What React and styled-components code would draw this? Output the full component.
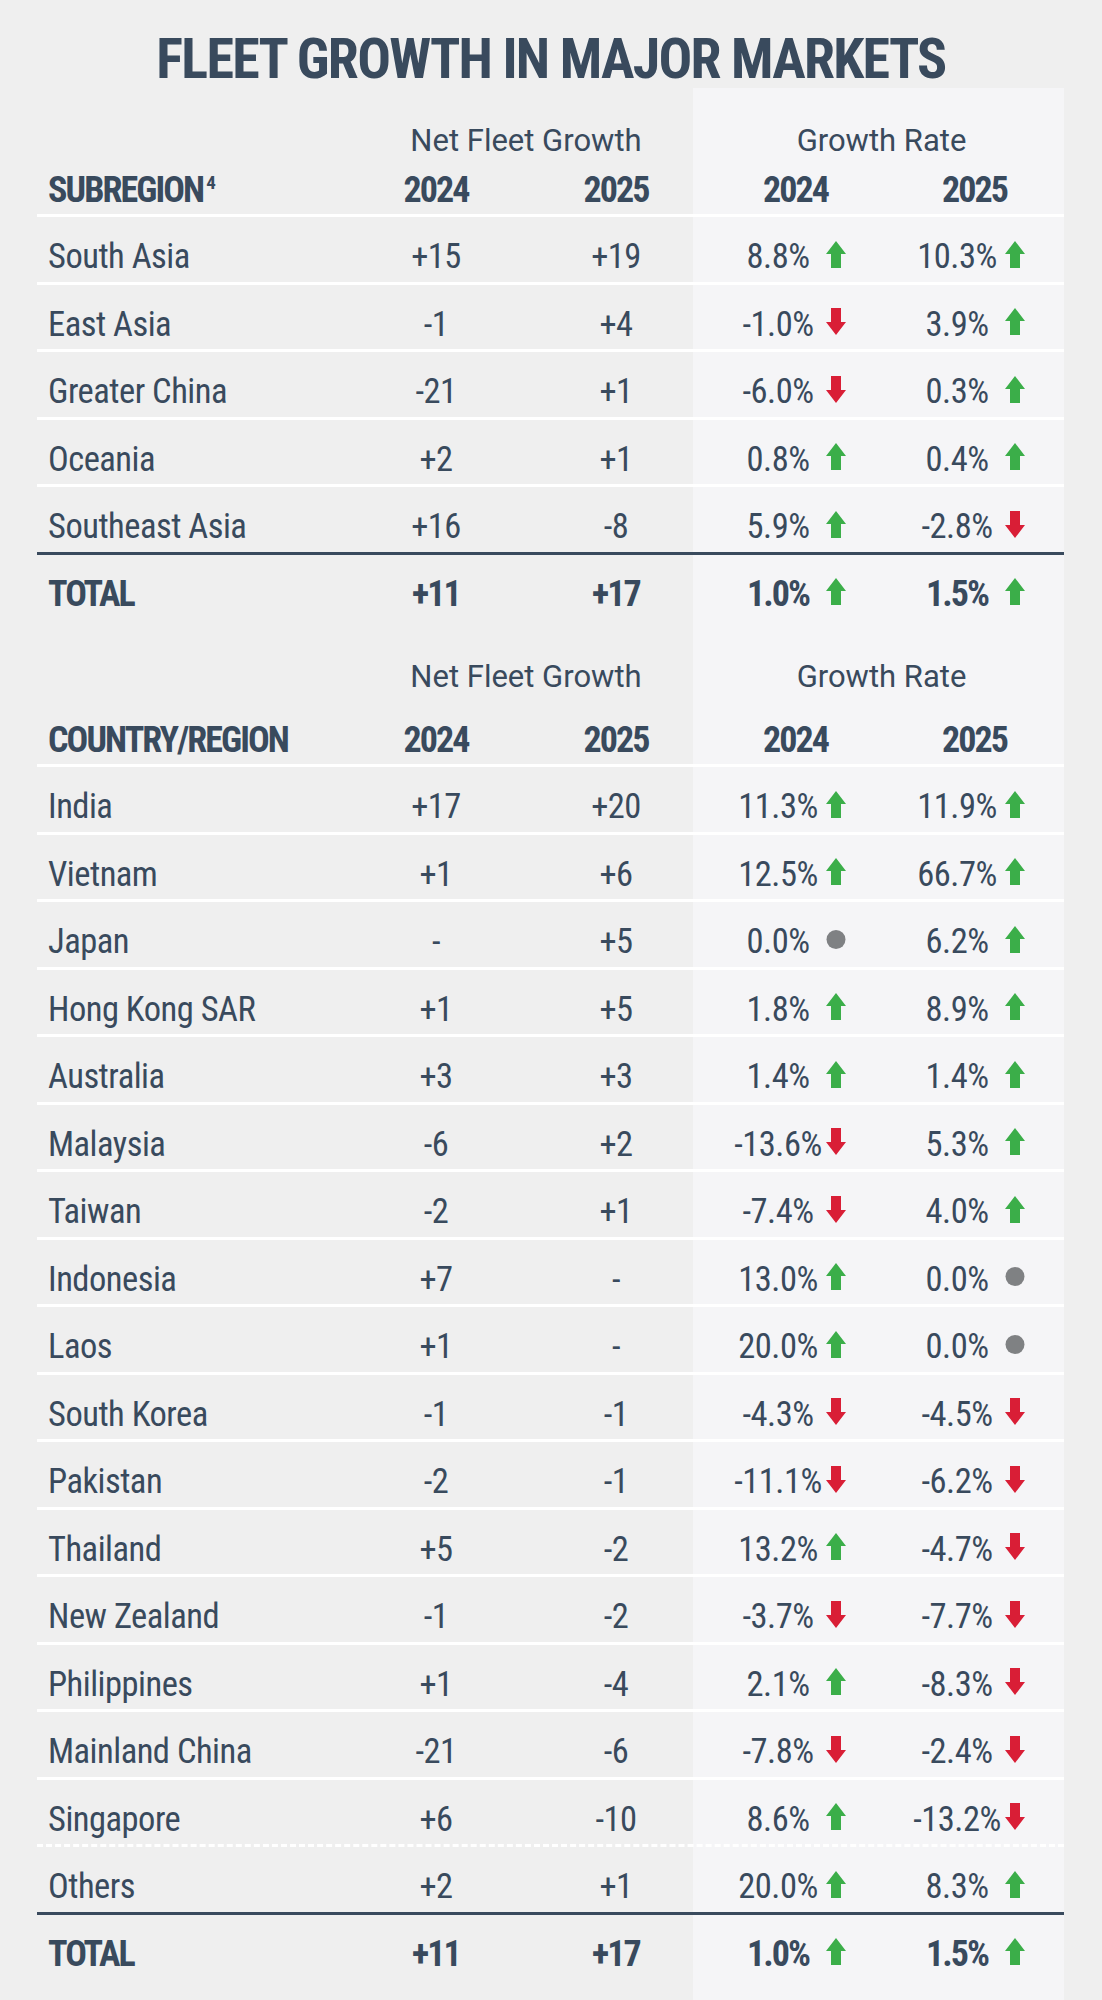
import styled, { createGlobalStyle } from "styled-components";

const INK = "#394a5d";
const UP = "#3bae49";
const DOWN = "#d91e36";
const FLAT = "#7f8183";

const GlobalStyle = createGlobalStyle`
  html, body {
    margin: 0;
    background: #efefef;
  }
  body {
    font-family: Roboto, "Liberation Sans", sans-serif;
    font-stretch: 75%;
    color: ${INK};
  }
`;

const subregions = [
  ["South Asia", "+15", "+19", "8.8%", "up", "10.3%", "up"],
  ["East Asia", "-1", "+4", "-1.0%", "down", "3.9%", "up"],
  ["Greater China", "-21", "+1", "-6.0%", "down", "0.3%", "up"],
  ["Oceania", "+2", "+1", "0.8%", "up", "0.4%", "up"],
  ["Southeast Asia", "+16", "-8", "5.9%", "up", "-2.8%", "down"],
];

const countries = [
  ["India", "+17", "+20", "11.3%", "up", "11.9%", "up"],
  ["Vietnam", "+1", "+6", "12.5%", "up", "66.7%", "up"],
  ["Japan", "-", "+5", "0.0%", "flat", "6.2%", "up"],
  ["Hong Kong SAR", "+1", "+5", "1.8%", "up", "8.9%", "up"],
  ["Australia", "+3", "+3", "1.4%", "up", "1.4%", "up"],
  ["Malaysia", "-6", "+2", "-13.6%", "down", "5.3%", "up"],
  ["Taiwan", "-2", "+1", "-7.4%", "down", "4.0%", "up"],
  ["Indonesia", "+7", "-", "13.0%", "up", "0.0%", "flat"],
  ["Laos", "+1", "-", "20.0%", "up", "0.0%", "flat"],
  ["South Korea", "-1", "-1", "-4.3%", "down", "-4.5%", "down"],
  ["Pakistan", "-2", "-1", "-11.1%", "down", "-6.2%", "down"],
  ["Thailand", "+5", "-2", "13.2%", "up", "-4.7%", "down"],
  ["New Zealand", "-1", "-2", "-3.7%", "down", "-7.7%", "down"],
  ["Philippines", "+1", "-4", "2.1%", "up", "-8.3%", "down"],
  ["Mainland China", "-21", "-6", "-7.8%", "down", "-2.4%", "down"],
  ["Singapore", "+6", "-10", "8.6%", "up", "-13.2%", "down"],
  ["Others", "+2", "+1", "20.0%", "up", "8.3%", "up"],
];

const total = ["TOTAL", "+11", "+17", "1.0%", "up", "1.5%", "up"];

function Trend({ dir }) {
  if (dir === "flat") {
    return (
      <TrendIcon viewBox="0 0 20 27">
        <circle cx="10" cy="13.5" r="9.5" fill={FLAT} />
      </TrendIcon>
    );
  }
  if (dir === "down") {
    return (
      <TrendIcon viewBox="0 0 20 27">
        <polygon points="5,0 15,0 15,14 20,14 10,27 0,14 5,14" fill={DOWN} />
      </TrendIcon>
    );
  }
  return (
    <TrendIcon viewBox="0 0 20 27">
      <polygon points="10,0 20,13 15,13 15,27 5,27 5,13 0,13" fill={UP} />
    </TrendIcon>
  );
}

function Rate({ value, dir }) {
  return (
    <RateCell>
      <Value>{value}</Value>
      <Trend dir={dir} />
    </RateCell>
  );
}

function Row({ data, line, bold }) {
  const [name, n24, n25, r24, d24, r25, d25] = data;
  return (
    <DataRow $line={line} $bold={bold}>
      <Name>{name}</Name>
      <Num>{n24}</Num>
      <Num>{n25}</Num>
      <Rate value={r24} dir={d24} />
      <Rate value={r25} dir={d25} />
    </DataRow>
  );
}

function Section({ label, sup, rows, groupTop, headGap }) {
  return (
    <>
      <GroupRow $top={groupTop}>
        <span />
        <GroupLabel>Net Fleet Growth</GroupLabel>
        <GroupLabel $shift={7}>Growth Rate</GroupLabel>
      </GroupRow>
      <HeadRow $gap={headGap}>
        <Name>
          {label}
          {sup && <Sup>{sup}</Sup>}
        </Name>
        <Num>2024</Num>
        <Num>2025</Num>
        <Num>2024</Num>
        <Num>2025</Num>
      </HeadRow>
      {rows.map((r, i) => {
        let line = "solid";
        if (i === rows.length - 1) line = "dark";
        else if (r[0] === "Singapore") line = "dashed";
        return <Row key={r[0]} data={r} line={line} />;
      })}
      <Row data={total} line="none" bold />
    </>
  );
}

export default function App() {
  return (
    <Page>
      <GlobalStyle />
      <Title>FLEET GROWTH IN MAJOR MARKETS</Title>
      <Sheet>
        <Section label="SUBREGION" sup="4" rows={subregions} groupTop={33} headGap={9} />
        <Section label="COUNTRY/REGION" rows={countries} groupTop={38} headGap={23} />
      </Sheet>
    </Page>
  );
}

const COLS = "309px 180px 180px 179px 179px";

const Page = styled.div`
  width: 1102px;
  padding-top: 31px;
`;

const Title = styled.h1`
  margin: 0 0 1px;
  font-size: 56px;
  line-height: 56px;
  font-weight: 700;
  letter-spacing: -1.7px;
  text-align: center;
  color: ${INK};
`;

// light panel behind the growth-rate columns
const Sheet = styled.div`
  display: flow-root;
  width: 1027px;
  margin-left: 37px;
  padding-bottom: 40px;
  background-image: linear-gradient(#f5f5f7, #f5f5f7);
  background-repeat: no-repeat;
  background-position: 656px 0;
  background-size: 371px 100%;
`;

const GroupRow = styled.div`
  display: grid;
  grid-template-columns: 309px 360px 358px;
  margin-top: ${(p) => p.$top}px;
  height: 40px;
  line-height: 40px;
  font-size: 31px;
  font-stretch: 92%;
`;

const GroupLabel = styled.div`
  text-align: center;
  white-space: nowrap;
  padding-right: ${(p) => p.$shift || 0}px;
`;

const HeadRow = styled.div`
  display: grid;
  grid-template-columns: ${COLS};
  padding: ${(p) => p.$gap}px 0 4px;
  line-height: 40px;
  font-size: 36px;
  font-weight: 700;
  letter-spacing: -1.9px;
  border-bottom: 3px solid #fff;
`;

const lineStyles = {
  solid: "3px solid #fff",
  dashed: "3px dashed #fff",
  dark: `3px solid ${INK}`,
  none: "0",
};

const DataRow = styled.div`
  display: grid;
  grid-template-columns: ${COLS};
  padding: 19px 0 5.5px;
  line-height: 40px;
  font-size: ${(p) => (p.$bold ? 36 : 34.5)}px;
  font-weight: ${(p) => (p.$bold ? 700 : 400)};
  letter-spacing: ${(p) => (p.$bold ? -1.9 : -0.5)}px;
  border-bottom: ${(p) => lineStyles[p.$line]};
`;

const Name = styled.div`
  padding-left: 11px;
  white-space: nowrap;
`;

const Sup = styled.sup`
  font-size: 19px;
  line-height: 0;
  letter-spacing: 0;
  margin-left: 3px;
  vertical-align: 13px;
`;

const Num = styled.div`
  text-align: center;
  white-space: nowrap;
`;

const RateCell = styled.div`
  display: grid;
  grid-template-columns: 120px 20px;
  align-items: center;
`;

const Value = styled.span`
  margin-left: 24px;
  text-align: center;
  white-space: nowrap;
`;

const TrendIcon = styled.svg`
  width: 20px;
  height: 27px;
  display: block;
  transform: translateY(-2px);
`;
